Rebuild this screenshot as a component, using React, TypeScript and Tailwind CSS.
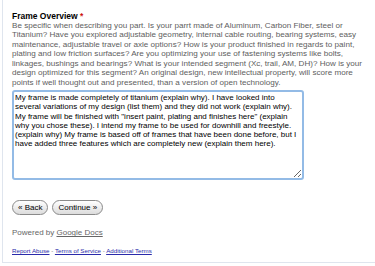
import React from "react";

const description = [
  "Be specific when describing you part. Is your parrt made of Aluminum, Carbon Fiber, steel or",
  "Titanium? Have you explored adjustable geometry, internal cable routing, bearing systems, easy",
  "maintenance, adjustable travel or axle options? How is your product finished in regards to paint,",
  "plating and low friction surfaces? Are you optimizing your use of fastening systems like bolts,",
  "linkages, bushings and bearings? What is your intended segment (Xc, trail, AM, DH)? How is your",
  "design optimized for this segment? An original design, new intellectual property, will score more",
  "points if well thought out and presented, than a version of open technology.",
];

const answer =
  "My frame is made completely of titanium (explain why). I have looked into several variations of my design (list them) and they did not work (explain why). My frame will be finished with \"insert paint, plating and finishes here\" (explain why you chose these). I intend my frame to be used for downhill and freestyle. (explain why) My frame is based off of frames that have been done before, but I have added three features which are completely new (explain them here).";

export default function App() {
  return (
    <div className="w-[375px] h-[266px] bg-white overflow-hidden font-['Liberation_Sans',Arial,sans-serif]">
      <div className="ml-[2px] h-[263px] border-l border-b border-[#dfe5ee] pl-[9px] pt-[11px]">
        {/* question */}
        <div className="text-[8.5px] leading-[10px] font-bold text-black">
          Frame Overview <span className="text-[#c11]">*</span>
        </div>
        <div className="text-[8.1px] leading-[9.45px] text-[#606060] whitespace-nowrap">
          {description.map((l) => (
            <div key={l}>{l}</div>
          ))}
        </div>

        <textarea
          readOnly
          value={answer}
          className="mt-[3px] block w-[292px] h-[90px] resize-y rounded-[3px] border-2 border-[#93bbe6] px-[1px] py-[1px] text-[8px] leading-[9.2px] text-black outline-none"
        />

        {/* nav buttons */}
        <div className="mt-[20px] flex gap-[4px]">
          <button className="h-[15px] rounded-full border border-[#8a8a8a] bg-gradient-to-b from-white to-[#dcdcdc] px-[5px] text-[8px] text-black">
            « Back
          </button>
          <button className="h-[15px] rounded-full border border-[#8a8a8a] bg-gradient-to-b from-white to-[#dcdcdc] px-[5px] text-[8px] text-black">
            Continue »
          </button>
        </div>

        <div className="mt-[12px] text-[8px] text-[#666]">
          Powered by <span className="underline">Google Docs</span>
        </div>

        <div className="mt-[7px] text-[6.2px] text-[#777]">
          <span className="text-[#2a2aaa] underline">Report Abuse</span> -{" "}
          <span className="text-[#2a2aaa] underline">Terms of Service</span> -{" "}
          <span className="text-[#2a2aaa] underline">Additional Terms</span>
        </div>
      </div>
    </div>
  );
}
